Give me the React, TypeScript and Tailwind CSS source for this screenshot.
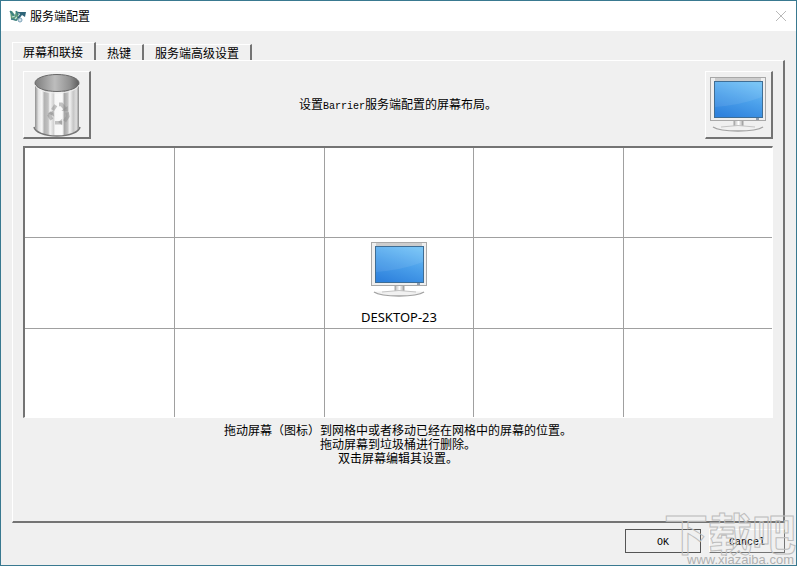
import { useState } from "react";

const tabs = ["屏幕和联接", "热键", "服务端高级设置"];

const hints = [
  "拖动屏幕（图标）到网格中或者移动已经在网格中的屏幕的位置。",
  "拖动屏幕到垃圾桶进行删除。",
  "双击屏幕编辑其设置。",
];

const COLUMNS = 5;
const ROWS = 3;

const screens: Record<number, string> = { 7: "DESKTOP-23" };

function AppLogo() {
  return (
    <svg width="18" height="16" viewBox="0 0 18 16" aria-hidden="true">
      <path d="M1 3l2 0 3 4 1-4 3 1-1 5 1 2-3 2-5-2z" fill="#5f9c7c" />
      <path d="M1 3l5 6M2 11l6 1M7 3l2 4" stroke="#3a7d85" strokeWidth="1.4" fill="none" />
      <path d="M3 9l3-1M6 11l2-2" stroke="#c4e0d0" strokeWidth="1.2" />
      <path d="M8 4h9l-1 5-3-2-3 4-2-1 3-4z" fill="#2f6478" />
      <circle cx="11" cy="12" r="2" fill="#d3e2ea" stroke="#7ba2b8" />
    </svg>
  );
}

function TrashIcon() {
  return (
    <svg width="48" height="64" viewBox="0 0 48 64" aria-hidden="true">
      <defs>
        <linearGradient id="bin" x1="0" x2="1">
          <stop offset="0" stopColor="#8f8f8f" />
          <stop offset="0.08" stopColor="#e2e2e2" />
          <stop offset="0.16" stopColor="#f8f8f8" />
          <stop offset="0.21" stopColor="#b2b2b2" />
          <stop offset="0.3" stopColor="#c2c2c2" />
          <stop offset="0.34" stopColor="#f4f4f4" />
          <stop offset="0.42" stopColor="#d2d2d2" />
          <stop offset="0.46" stopColor="#f7f7f7" />
          <stop offset="0.62" stopColor="#fafafa" />
          <stop offset="0.67" stopColor="#a8a8a8" />
          <stop offset="0.74" stopColor="#c0c0c0" />
          <stop offset="0.79" stopColor="#f2f2f2" />
          <stop offset="0.87" stopColor="#c6c6c6" />
          <stop offset="0.94" stopColor="#dedede" />
          <stop offset="1" stopColor="#858585" />
        </linearGradient>
        <linearGradient id="binInside" x1="0" x2="1">
          <stop offset="0" stopColor="#7d7d7d" />
          <stop offset="0.45" stopColor="#bdbdbd" />
          <stop offset="0.8" stopColor="#909090" />
          <stop offset="1" stopColor="#5d5d5d" />
        </linearGradient>
      </defs>
      <path d="M2 10v44c0 5 9 9 22 9s22-4 22-9V10z" fill="url(#bin)" />
      <path d="M1 54c1 5 10 9 23 9s22-4 23-9" fill="none" stroke="#777777" strokeWidth="1.5" />
      <ellipse cx="24" cy="10" rx="22" ry="8.500" fill="url(#binInside)" stroke="#686868" />
      <path d="M2 12c2 5 11 8 22 8s20-3 22-8" fill="none" stroke="#eeeeee" />
      <g transform="translate(6 9) scale(0.8)">
        <g fill="none" stroke="#8d8d8d" strokeWidth="4.500" opacity="0.5">
          <path d="M17 35l4-6M25 28h3l5 6" />
          <path d="M35 38l1 5-4 6" />
          <path d="M29 51h-9M16 47l-3-5 3-4" />
        </g>
        <g fill="#8d8d8d" opacity="0.5">
          <path d="M28 36l8 1V30z" />
          <path d="M29 46v8l-5-4z" />
          <path d="M11 39l7-3 1 7z" />
        </g>
      </g>
    </svg>
  );
}

function ScreenIcon() {
  return (
    <svg width="58" height="58" viewBox="0 0 58 58" aria-hidden="true">
      <defs>
        <linearGradient id="glass" x1="0.7" y1="0" x2="0.3" y2="1">
          <stop offset="0" stopColor="#6ebff5" />
          <stop offset="0.5" stopColor="#4a9fea" />
          <stop offset="1" stopColor="#2f82dd" />
        </linearGradient>
        <linearGradient id="stand" x1="0" x2="1">
          <stop offset="0" stopColor="#b8b8b8" />
          <stop offset="0.5" stopColor="#ffffff" />
          <stop offset="1" stopColor="#a8a8a8" />
        </linearGradient>
      </defs>
      <path d="M25 44h9v8h-9z" fill="url(#stand)" stroke="#909090" strokeWidth="0.8" />
      <path d="M4 51q8-1 21-1h9q13 0 20 1-6 4-25 4T4 51z" fill="#f1f1f1" />
      <path d="M4 51q6 4 25 4t25-4" fill="none" stroke="#a2a2a2" strokeWidth="1.4" />
      <path d="M12 51q17-3 34 0" fill="none" stroke="#c4c4c4" />
      <rect x="1.500" y="1.500" width="55" height="43" fill="#efefef" stroke="#a8a8a8" />
      <path d="M6 2h46v3H6z" fill="#cdcdcd" />
      <rect x="5.500" y="5.500" width="48" height="36" fill="url(#glass)" stroke="#3f6d94" />
      <path d="M6 31Q32 29 53 21V6H6z" fill="#ffffff" opacity="0.08" />
      <rect x="47" y="42" width="3" height="2" fill="#8d9db0" />
    </svg>
  );
}

const raised =
  "border-t border-l border-t-white border-l-white border-r-2 border-b-2 border-r-[#747474] border-b-[#747474]";

export default function App() {
  const [active, setActive] = useState(0);

  return (
    <div className="relative flex min-h-screen flex-col overflow-hidden border border-[#397990] bg-[#f0f0f0] font-['Noto_Sans_CJK_SC',sans-serif] text-xs text-black">
      <header className="flex h-[30px] items-center bg-white pr-1 pl-2">
        <AppLogo />
        <h1 className="ml-[3px]">服务端配置</h1>
        <button type="button" aria-label="关闭" className="ml-auto p-1">
          <svg width="14" height="14" viewBox="0 0 14 14" aria-hidden="true">
            <path d="M2 2l10 10M12 2L2 12" stroke="#b9b9b9" />
          </svg>
        </button>
      </header>

      <main className="flex grow flex-col px-[11px] pt-[11px] pb-3">
        <div role="tablist" className="flex items-end">
          {tabs.map((tab, i) => (
            <button
              key={tab}
              type="button"
              role="tab"
              aria-selected={active === i}
              onClick={() => setActive(i)}
              className={
                active === i
                  ? "h-[18px] border-t border-r-2 border-l border-t-white border-r-[#747474] border-l-white pr-[11px] pl-[10px] leading-4"
                  : "h-4 border-t border-r-2 border-t-white border-r-[#747474] pr-[11px] pl-[11px] leading-4"
              }
            >
              {tab}
            </button>
          ))}
        </div>

        <section
          role="tabpanel"
          className="flex grow flex-col border-t border-r-2 border-b-2 border-l border-t-white border-r-[#747474] border-b-[#747474] border-l-white px-[10px] pt-[10px]"
        >
          <div className="flex items-center justify-between">
            <button
              type="button"
              aria-label="垃圾桶"
              className={`flex size-[68px] items-center justify-center ${raised}`}
            >
              <TrashIcon />
            </button>
            <p>
              设置
              <span className="font-['Liberation_Mono',monospace] text-[10px]">Barrier</span>
              服务端配置的屏幕布局。
            </p>
            <button
              type="button"
              aria-label="新屏幕"
              className={`flex size-[68px] items-center justify-center ${raised}`}
            >
              <ScreenIcon />
            </button>
          </div>

          <div className="mt-[7px] grid grid-cols-[150fr_150fr_150fr_150fr_148fr] grid-rows-[90px_91px_88px] border-t-2 border-r border-b border-l-2 border-t-[#747474] border-r-white border-b-white border-l-[#747474] bg-white">
            {Array.from({ length: COLUMNS * ROWS }, (_, i) => (
              <div
                key={i}
                className={`flex flex-col items-center border-[#a0a0a0] pt-[3px] ${
                  i % COLUMNS < COLUMNS - 1 ? "border-r" : ""
                } ${i < COLUMNS * (ROWS - 1) ? "border-b" : ""}`}
              >
                {screens[i] && (
                  <>
                    <ScreenIcon />
                    <span className="mt-[10px] font-['Noto_Sans',sans-serif] text-[13px] leading-4">
                      {screens[i]}
                    </span>
                  </>
                )}
              </div>
            ))}
          </div>

          <div className="mt-[5px] text-center leading-[14px]">
            {hints.map((hint) => (
              <p key={hint}>{hint}</p>
            ))}
          </div>
        </section>

        <div className="mt-[6px] flex justify-end gap-2 font-['Liberation_Mono',monospace] text-[10px]">
          <button type="button" className="h-6 w-[76px] border border-[#555555] pt-1">
            OK
          </button>
          <button
            type="button"
            className="h-6 w-[76px] border border-t-white border-r-[#747474] border-b-[#747474] border-l-white pt-1"
          >
            Cancel
          </button>
        </div>
      </main>

      <div className="pointer-events-none absolute right-0 bottom-0 flex flex-col items-end whitespace-nowrap">
        <span className="text-[44px] leading-[46px] font-bold text-transparent [-webkit-text-stroke:1px_#bdbdbd]">
          下载吧
        </span>
        <span className="pr-[2px] font-['Liberation_Sans',sans-serif] text-[13px] leading-[10px] text-[#b0b0b0]">
          www.xiazaiba.com
        </span>
      </div>
    </div>
  );
}
